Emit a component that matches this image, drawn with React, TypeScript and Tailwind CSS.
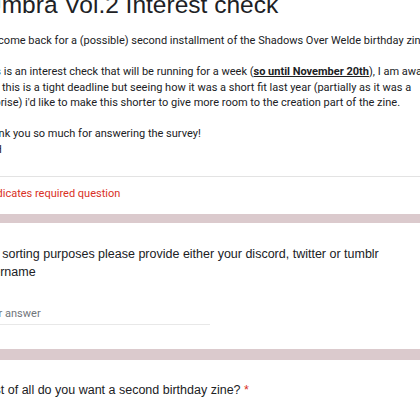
import React from "react";

const body = "font-['Roboto',sans-serif] text-[11px] leading-[15.5px] text-[#202124] whitespace-nowrap";

export default function App() {
    return (
        <div className="w-[420px] h-[420px] overflow-hidden bg-[#dbcacd]">
            <div className="-ml-[28px] w-[720px] flex flex-col">
                {/* header card */}
                <div className="bg-white h-[214px] flex flex-col">
                    <div className="px-[8px] -mt-[10px]">
                        <h1 className="ml-[4px] font-['Liberation_Sans',Arial,sans-serif] text-[24.5px] leading-[30px] text-[#202124] whitespace-nowrap">
                            Umbra Vol.2 Interest check
                        </h1>
                        <div className={`${body} mt-[13px]`}>
                            <p>Welcome back for a (possible) second installment of the Shadows Over Welde birthday zine!</p>
                            <p>&nbsp;</p>
                            <p>
                                This is an interest check that will be running for a week (
                                <span className="font-bold underline">so until November 20th</span>), I am aware
                            </p>
                            <p>that this is a tight deadline but seeing how it was a short fit last year (partially as it was a</p>
                            <p className="-ml-[1px]">surprise) i'd like to make this shorter to give more room to the creation part of the zine.</p>
                            <p>&nbsp;</p>
                            <p>Thank you so much for answering the survey!</p>
                            <p className="pl-[14px]">H</p>
                        </div>
                    </div>
                    <div className="mt-[19px] border-t border-[#e3e3e3]" />
                    <p className="px-[8px] mt-[9px] font-['Roboto',sans-serif] text-[11px] leading-[15px] text-[#d93025] whitespace-nowrap">
                        * Indicates required question
                    </p>
                </div>

                {/* question 1 */}
                <div className="mt-[9px] bg-white h-[126px] px-[8px] pt-[22px]">
                    <p className="font-['Liberation_Sans',Arial,sans-serif] text-[12.5px] leading-[18px] text-[#202124] w-[424px]">
                        For sorting purposes please provide either your discord, twitter or tumblr username
                    </p>
                    <div className="mt-[25px] w-[230px] border-b border-[#e8e8e8] pb-[3px]">
                        <p className="font-['Roboto',sans-serif] text-[11px] leading-[15px] text-[#70757a]">Your answer</p>
                    </div>
                </div>

                {/* question 2 */}
                <div className="mt-[11px] bg-white h-[200px] px-[8px] pt-[21px]">
                    <p className="font-['Liberation_Sans',Arial,sans-serif] text-[12.5px] leading-[18px] text-[#202124] whitespace-nowrap">
                        First of all do you want a second birthday zine? <span className="text-[#d93025]">*</span>
                    </p>
                </div>
            </div>
        </div>
    );
}
